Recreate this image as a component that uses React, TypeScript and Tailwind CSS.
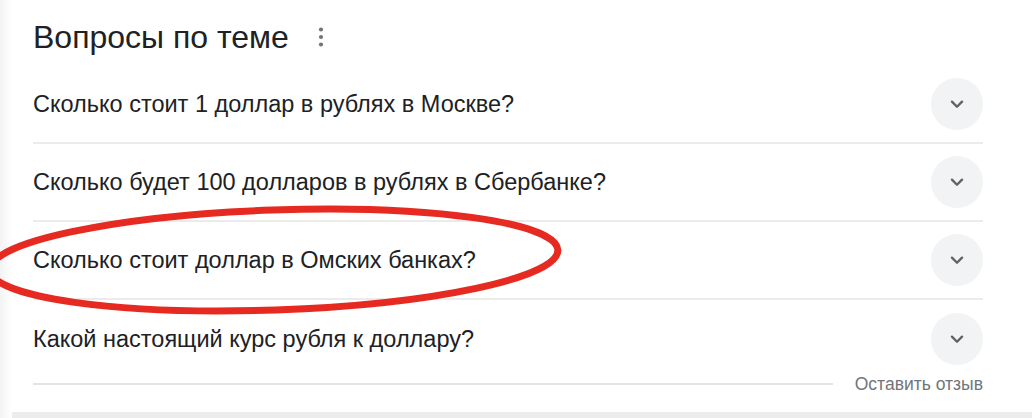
import * as React from "react";

const questions = [
  "Сколько стоит 1 доллар в рублях в Москве?",
  "Сколько будет 100 долларов в рублях в Сбербанке?",
  "Сколько стоит доллар в Омских банках?",
  "Какой настоящий курс рубля к доллару?",
];

function Chevron() {
  return (
    <div className="flex h-[52px] w-[52px] shrink-0 items-center justify-center rounded-full bg-[#f1f3f4]">
      <svg width="22" height="22" viewBox="0 0 24 24" fill="none">
        <path d="M6.5 9.5l5.5 5.5 5.5-5.5" stroke="#5f6368" strokeWidth="2.6" strokeLinecap="round" strokeLinejoin="round" />
      </svg>
    </div>
  );
}

function MoreDots() {
  return (
    <svg width="8" height="20" viewBox="0 0 8 20" className="ml-[28px]">
      <circle cx="4" cy="2.5" r="2.1" fill="#70757a" />
      <circle cx="4" cy="10" r="2.1" fill="#70757a" />
      <circle cx="4" cy="17.5" r="2.1" fill="#70757a" />
    </svg>
  );
}

export default function App() {
  return (
    <div
      className="relative h-[418px] w-[1032px] overflow-hidden bg-white text-[#202124]"
      style={{ fontFamily: '"Liberation Sans", Arial, sans-serif' }}
    >
      <div className="flex h-full">
        <div className="w-[12px] bg-gradient-to-r from-[#f3f3f3] to-white" />
        <div className="flex flex-1 flex-col">
          <div className="flex flex-1 flex-col pl-[21px] pr-[49px]">
            <div className="flex h-[66px] items-end pb-[10px]">
              <div className="flex items-center">
                <h2 className="text-[32px] leading-[38px]">Вопросы по теме</h2>
                <MoreDots />
              </div>
            </div>
            {questions.map((q, i) => (
              <div
                key={q}
                className={
                  "flex h-[78px] items-center justify-between " +
                  (i < questions.length - 1 ? "border-b-2 border-[#ebebeb]" : "")
                }
              >
                <span className="text-[23.5px] leading-[28px]">{q}</span>
                <Chevron />
              </div>
            ))}
            <div className="-mt-[4px] flex h-[20px] items-center">
              <div className="h-[2px] flex-1 bg-[#e4e4e4]" />
              <span className="ml-[22px] text-[17.5px] leading-[20px] text-[#70757a]">Оставить отзыв</span>
            </div>
          </div>
          <div className="h-[6px] bg-[#ececec]" />
        </div>
      </div>
      {/* red annotation ring */}
      <svg className="absolute left-0 top-0" width="1032" height="418" viewBox="0 0 1032 418" fill="none">
        <ellipse
          cx="274"
          cy="260"
          rx="284"
          ry="50"
          transform="rotate(-2 274 260)"
          stroke="#e62a22"
          strokeWidth="7"
        />
      </svg>
    </div>
  );
}
